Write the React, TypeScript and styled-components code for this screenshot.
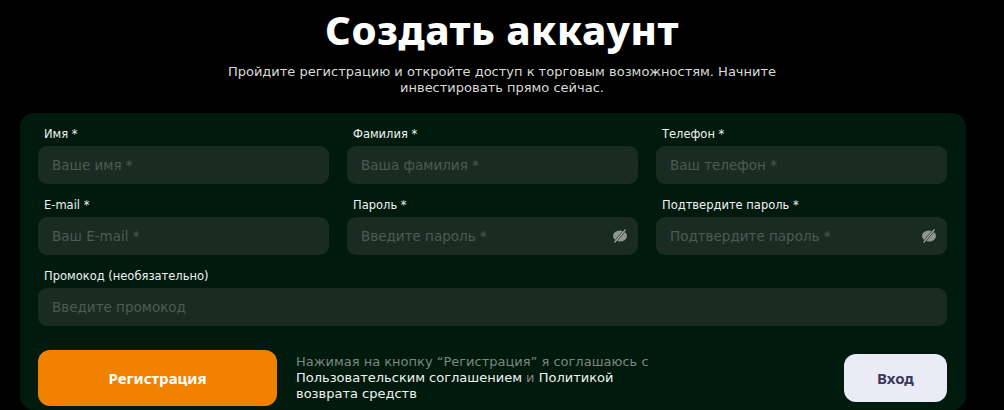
import React from 'react';
import styled, { createGlobalStyle } from 'styled-components';

const Global = createGlobalStyle`
  body { margin: 0; background: #000; font-family: "DejaVu Sans", "Noto Sans", sans-serif; }
`;

const Page = styled.div`
  width: 1004px;
  height: 410px;
  overflow: hidden;
  display: flex;
  flex-direction: column;
  align-items: center;
`;

const Title = styled.h1`
  margin: 6px 0 0;
  color: #fff;
  font-family: "Noto Sans", sans-serif;
  font-weight: 800;
  font-size: 40px;
  line-height: 48px;
  letter-spacing: 0.5px;
`;

const Sub = styled.p`
  margin: 10px 0 0;
  width: 620px;
  text-align: center;
  color: #d8dbd9;
  font-size: 13px;
  line-height: 16px;
`;

const Card = styled.div`
  margin-top: 17px;
  width: 946px;
  align-self: flex-start;
  margin-left: 20px;
  box-sizing: border-box;
  background: #011a0e;
  border-radius: 14px;
  padding: 14px 18px 0;
  display: grid;
  grid-template-columns: repeat(3, 291px);
  column-gap: 18px;
  row-gap: 14px;
`;

const Field = styled.div<{ $wide?: boolean }>`
  display: flex;
  flex-direction: column;
  ${p => (p.$wide ? 'grid-column: 1 / -1;' : '')}
`;

const Label = styled.label`
  color: #f0f2f1;
  font-size: 11.5px;
  line-height: 14px;
  margin: 0 0 5px 6px;
`;

const InputBox = styled.div`
  height: 38px;
  border-radius: 9px;
  background: #1a2b23;
  display: flex;
  align-items: center;
  padding: 0 10px 0 12px;
`;

const Input = styled.input`
  flex: 1;
  min-width: 0;
  background: transparent;
  border: none;
  outline: none;
  color: #fff;
  font-family: inherit;
  font-size: 13.5px;
  &::placeholder { color: #4b5c53; }
`;

const Bottom = styled.div`
  grid-column: 1 / -1;
  display: flex;
  align-items: center;
  margin-top: 10px;
  padding-bottom: 4px;
`;

const Primary = styled.button`
  width: 239px;
  height: 56px;
  border: none;
  border-radius: 12px;
  background: #f08200;
  color: #fff;
  font-family: "Noto Sans", sans-serif;
  font-weight: 700;
  font-size: 15px;
`;

const Note = styled.p`
  margin: 0 0 0 19px;
  width: 380px;
  color: #7d8781;
  font-size: 13px;
  line-height: 16px;
`;

const Link = styled.span`
  color: #f0f2f1;
`;

const Login = styled.button`
  margin-left: auto;
  width: 103px;
  height: 48px;
  border: none;
  border-radius: 12px;
  background: #ebebf5;
  color: #3a3a5e;
  font-family: "Noto Sans", sans-serif;
  font-weight: 700;
  font-size: 15px;
`;

const EyeOff = () => (
  <svg width="16" height="16" viewBox="0 0 16 16">
    <ellipse cx="8" cy="8" rx="7" ry="5.5" fill="#8d9690" />
    <path d="M2.5 14.5 L13.5 1.5" stroke="#1a2b23" strokeWidth="2.4" />
    <path d="M2.5 14.5 L13.5 1.5" stroke="#d0d4d2" strokeWidth="1.1" />
  </svg>
);

const fields: { label: string; ph: string; eye?: boolean; wide?: boolean }[] = [
  { label: 'Имя *', ph: 'Ваше имя *' },
  { label: 'Фамилия *', ph: 'Ваша фамилия *' },
  { label: 'Телефон *', ph: 'Ваш телефон *' },
  { label: 'E-mail *', ph: 'Ваш E-mail *' },
  { label: 'Пароль *', ph: 'Введите пароль *', eye: true },
  { label: 'Подтвердите пароль *', ph: 'Подтвердите пароль *', eye: true },
  { label: 'Промокод (необязательно)', ph: 'Введите промокод', wide: true },
];

export default function App() {
  return (
    <Page>
      <Global />
      <Title>Создать аккаунт</Title>
      <Sub>
        Пройдите регистрацию и откройте доступ к торговым возможностям. Начните инвестировать прямо сейчас.
      </Sub>
      <Card>
        {fields.map(f => (
          <Field key={f.label} $wide={f.wide}>
            <Label>{f.label}</Label>
            <InputBox>
              <Input placeholder={f.ph} type={f.eye ? 'password' : 'text'} />
              {f.eye && <EyeOff />}
            </InputBox>
          </Field>
        ))}
        <Bottom>
          <Primary>Регистрация</Primary>
          <Note>
            Нажимая на кнопку “Регистрация” я соглашаюсь с <Link>Пользовательским соглашением</Link> и{' '}
            <Link>Политикой возврата средств</Link>
          </Note>
          <Login>Вход</Login>
        </Bottom>
      </Card>
    </Page>
  );
}
